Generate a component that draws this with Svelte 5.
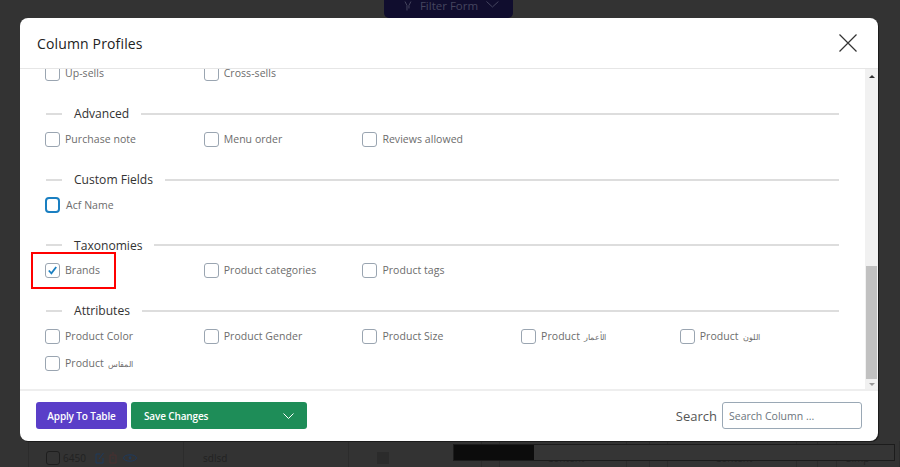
<script>
  const sections = [
    { title: 'Advanced', items: [{ name: 'Purchase note' }, { name: 'Menu order' }, { name: 'Reviews allowed' }] },
    { title: 'Custom Fields', items: [{ name: 'Acf Name' }] },
    { title: 'Taxonomies', items: [{ name: 'Brands' }, { name: 'Product categories' }, { name: 'Product tags' }] },
    {
      title: 'Attributes',
      items: [
        { name: 'Product Color' },
        { name: 'Product Gender' },
        { name: 'Product Size' },
        { name: 'Product', ar: 'الأعمار' },
        { name: 'Product', ar: 'اللون' },
        { name: 'Product', ar: 'المقاس' }
      ]
    }
  ];
  let checked = $state({ Brands: true });
  const lastRow = ['Up-sells', 'Cross-sells'];
  // table cells left behind the modal: width + text
  const cells = [
    { w: 18, text: '' },
    { w: 127, text: 'Content', pad: 47 },
    { w: 23, text: '' },
    { w: 18, text: '' },
    { w: 129, text: 'Content', pad: 47 },
    { w: 21, text: '' },
    { w: 19, text: '' },
    { w: 63, text: 'Simp', pad: 9 }
  ];
</script>

<div class="page">
  <div class="under-top">
    <div class="filter-btn">
      <svg width="8" height="10" viewBox="0 0 8 10"><path d="M1 0.5l2 4v5M7 0.5l-2 4v3" fill="none" stroke="#45455f" stroke-width="1"/></svg>
      <span>Filter Form</span>
      <svg class="chev" width="13" height="7" viewBox="0 0 13 7"><path d="M0.5 0.5l6 5.5 6-5.5" fill="none" stroke="#45455f" stroke-width="1"/></svg>
    </div>
  </div>
  <div class="under-bottom">
    <div class="under-row">
      <div class="cell c0"></div>
      <div class="cell c1">
        <span class="under-check"></span>
        <span class="under-id">6450</span>
        <svg class="under-icons" width="42" height="12" viewBox="0 0 42 12" fill="none">
          <path d="M5 2H1v9h7V6M4 7l4.5-6" stroke="#1f3a5c" stroke-width="1"/>
          <path d="M15 3h6v8h-6zM17 1h2M17 6h2" stroke="#4a3030" stroke-width="1"/>
          <ellipse cx="35" cy="6" rx="6.5" ry="3.2" stroke="#1f3a5c" stroke-width="1"/>
          <circle cx="35" cy="6" r="1.4" fill="#1f3a5c"/>
        </svg>
      </div>
      <div class="cell c2">sdlsd</div>
      <div class="cell c3"><span class="under-img"></span></div>
      {#each cells as c}
        <div class="cell" style="width: {c.w}px; padding-left: {c.pad || 0}px">{c.text}</div>
      {/each}
    </div>
    <div class="hbar"><div class="hthumb"></div></div>
  </div>

  <div class="modal">
    <header>
      <h2>Column Profiles</h2>
      <svg class="close" width="18" height="18" viewBox="0 0 18 18"><path d="M0.5 0.5l17 17M17.5 0.5l-17 17" stroke="#333" stroke-width="1.2" fill="none"/></svg>
    </header>

    <div class="body">
      <div class="content">
        <div class="list first">
          {#each lastRow as item}
            <label class="item"><span class="box"></span>{item}</label>
          {/each}
        </div>
        {#each sections as s}
          <section>
            <div class="head"><i class="dash"></i><span>{s.title}</span><i class="rule"></i></div>
            <div class="list">
              {#each s.items as item}
                <label class="item">
                  <span class="box" class:focus={item.name === 'Acf Name'}>
                    {#if checked[item.name]}
                      <svg width="9" height="9" viewBox="0 0 9 9"><path d="M0.8 4.5l2.6 2.8 4.8-6.3" fill="none" stroke="#1a7fc1" stroke-width="1.8"/></svg>
                    {/if}
                  </span>
                  <span>{item.name}{#if item.ar}<span class="ar">{item.ar}</span>{/if}</span>
                </label>
              {/each}
            </div>
          </section>
        {/each}
        <div class="highlight"></div>
      </div>
      <div class="scrollbar">
        <span class="arrow up"></span>
        <div class="track"><div class="thumb"></div></div>
        <span class="arrow down"></span>
      </div>
    </div>

    <footer>
      <div class="actions">
        <button class="apply">Apply To Table</button>
        <button class="save">
          <span>Save Changes</span>
          <svg width="11" height="6" viewBox="0 0 11 6"><path d="M0.5 0.5l5 5 5-5" fill="none" stroke="#fff" stroke-width="1"/></svg>
        </button>
      </div>
      <div class="search">
        <span>Search</span>
        <input placeholder="Search Column ..." />
      </div>
    </footer>
  </div>
</div>

<style>
  :global(body) {
    margin: 0;
    background: #333;
    overflow: hidden;
  }
  .page {
    position: relative;
    width: 900px;
    height: 467px;
    background: #333;
    font-family: "Open Sans", sans-serif;
    display: flex;
    flex-direction: column;
    justify-content: space-between;
    overflow: hidden;
  }
  .under-top {
    display: flex;
    padding-left: 384px;
  }
  .filter-btn {
    width: 129px;
    height: 18px;
    box-sizing: border-box;
    padding: 0 14px 7px 20px;
    background: #100d2e;
    border-radius: 0 0 5px 5px;
    color: #45455f;
    font-size: 11.5px;
    white-space: nowrap;
    display: flex;
    align-items: center;
    gap: 8px;
    overflow: hidden;
  }
  .chev { margin-top: -3px; }
  .under-bottom {
    position: relative;
    height: 26px;
  }
  .under-row {
    display: flex;
    height: 26px;
    color: #222;
    font-size: 10px;
  }
  .cell {
    flex: none;
    box-sizing: border-box;
    border-right: 1px solid #2c2c2c;
    display: flex;
    align-items: center;
    padding-top: 8px;
    white-space: nowrap;
  }
  .c0 { width: 29px; }
  .c1 { width: 155px; padding-left: 17px; }
  .c2 { width: 165px; padding-left: 19px; }
  .c3 { width: 133px; padding-left: 28px; }
  .under-check {
    width: 12px;
    height: 12px;
    border: 1px solid #1e1e1e;
    border-radius: 3px;
    flex: none;
  }
  .under-id { margin-left: 3px; width: 32px; flex: none; }
  .under-img {
    width: 12px;
    height: 12px;
    background: #2b2b2b;
  }
  .hbar {
    position: absolute;
    left: 453px;
    right: 5px;
    top: 3px;
    height: 17px;
    border: 1px solid #1c1c1c;
    box-sizing: border-box;
    background: #353535;
  }
  .hthumb {
    width: 80px;
    height: 100%;
    background: #0c0c0c;
  }
  .modal {
    position: absolute;
    left: 20px;
    top: 18px;
    width: 858px;
    height: 423px;
    background: #fff;
    border-radius: 8px;
    box-shadow: 1px 1px 0 #1c1c1c;
    display: flex;
    flex-direction: column;
    overflow: hidden;
  }
  header {
    height: 51px;
    box-sizing: border-box;
    flex: none;
    border-bottom: 1px solid #e6e6e6;
    display: flex;
    align-items: center;
    justify-content: space-between;
    padding: 0 21px 0 17px;
  }
  h2 {
    margin: 0;
    font-size: 14px;
    font-weight: 500;
    color: #222;
    letter-spacing: 0.15px;
  }
  .body {
    flex: 1;
    min-height: 0;
    display: flex;
  }
  .content {
    position: relative;
    flex: 1;
    overflow: hidden;
    padding: 0 26px 0 25px;
  }
  .list {
    display: grid;
    grid-template-columns: repeat(5, 158.7px);
    grid-auto-rows: 27.5px;
  }
  .list.first { margin-top: -9.2px; }
  section { margin-top: 13.17px; }
  .head {
    display: flex;
    align-items: center;
    gap: 12px;
    height: 27px;
    margin-bottom: -2px;
    font-size: 12.1px;
    font-weight: 500;
    color: #333;
  }
  .dash { width: 16px; height: 2px; background: #ddd; margin-left: 1px; }
  .rule { flex: 1; height: 2px; background: #ddd; }
  .item {
    display: flex;
    align-items: center;
    gap: 5px;
    font-size: 10.5px;
    line-height: 1;
    color: #6c6c6c;
    letter-spacing: 0.05px;
  }
  .ar {
    font-size: 8px;
    margin-left: 4px;
  }
  .box {
    width: 13px;
    height: 13px;
    border: 1px solid #9aa5b1;
    border-radius: 3px;
    display: flex;
    align-items: center;
    justify-content: center;
    flex: none;
  }
  .box.focus {
    border: 2px solid #1a7fc1;
    width: 11px;
    height: 12px;
    border-radius: 4px;
    margin-right: 1px;
  }
  .highlight {
    position: absolute;
    left: 11px;
    top: 183px;
    width: 85px;
    height: 37px;
    box-sizing: border-box;
    border: 2px solid #f00;
    pointer-events: none;
  }
  .scrollbar {
    width: 13px;
    flex: none;
    background: #f1f1f1;
    display: flex;
    flex-direction: column;
    align-items: center;
  }
  .track { flex: 1; width: 100%; display: flex; flex-direction: column; justify-content: flex-end; }
  .thumb { height: 113px; margin: 0 1px; background: #c1c1c1; }
  .arrow {
    flex: none;
    width: 0;
    height: 0;
    border-left: 3px solid transparent;
    border-right: 3px solid transparent;
  }
  .arrow.up { border-bottom: 3px solid #333; margin: 6px 0 2px; }
  .arrow.down { border-top: 3px solid #999; margin: 4px 0 3px; }
  footer {
    height: 52px;
    flex: none;
    border-top: 2px solid #eee;
    box-sizing: border-box;
    display: flex;
    align-items: center;
    justify-content: space-between;
    padding: 0 16px 1px;
  }
  .actions { display: flex; gap: 4px; }
  button {
    height: 27px;
    border: 0;
    border-radius: 3px;
    color: #fff;
    font-family: "Open Sans", sans-serif;
    font-size: 10px;
    font-weight: 600;
    letter-spacing: -0.15px;
    padding: 0;
  }
  .apply { width: 91px; background: #5a3ec8; }
  .save {
    width: 176px;
    background: #1e8d58;
    display: flex;
    align-items: center;
    justify-content: space-between;
    padding: 0 13px;
  }
  .search { display: flex; align-items: center; gap: 5px; font-size: 13px; color: #555; }
  input {
    width: 140px;
    height: 27px;
    box-sizing: border-box;
    border: 1px solid #9aa8b5;
    border-radius: 3px;
    padding: 0 6px;
    font-family: "Open Sans", sans-serif;
    font-size: 10.5px;
    outline: none;
  }
  input::placeholder { color: #6c757d; opacity: 1; }
</style>
